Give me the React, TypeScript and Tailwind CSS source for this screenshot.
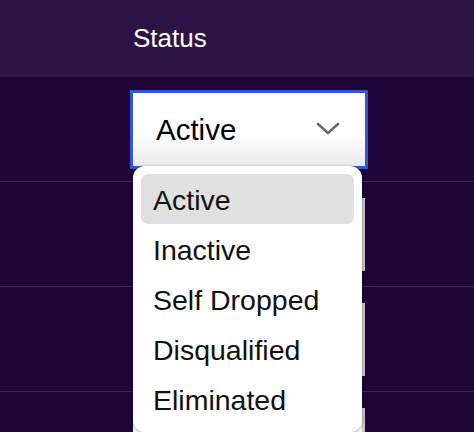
import React from "react";

const options = ["Active", "Inactive", "Self Dropped", "Disqualified", "Eliminated"];

function Chevron() {
  return (
    <svg width="24" height="14" viewBox="0 0 24 14" fill="none">
      <path d="M2 2 L12 11 L22 2" stroke="#6b6b6b" strokeWidth="2.6" strokeLinecap="round" strokeLinejoin="round" />
    </svg>
  );
}

function SelectBox({ focused }: { focused?: boolean }) {
  return (
    <div
      className={
        "w-[232px] h-[73px] flex items-center justify-between pl-[23px] pr-[25px] bg-[linear-gradient(to_bottom,#ffffff_55%,#ebebeb)] text-black text-[29.5px] " +
        (focused ? "outline-[3px] outline-[#3555d8]" : "border-r-[3px] border-[#c8c8c8]")
      }
    >
      <span className="pt-[3px]">Active</span>
      <Chevron />
    </div>
  );
}

export default function App() {
  return (
    <div className="relative w-[474px] h-[432px] overflow-hidden bg-[#1f0638] font-['Liberation_Sans',Arial,sans-serif]">
      <div className="h-[77px] bg-[#2d1447] flex items-center pl-[133px] text-white text-[26px]">
        Status
      </div>
      {[0, 1, 2, 3].map((i) => (
        <div key={i} className="h-[105px] border-b border-[#3b2a52] flex items-center pl-[133px]">
          <SelectBox focused={i === 0} />
        </div>
      ))}
      <div className="absolute left-[133px] top-[166px] w-[229px] rounded-[12px] bg-white p-2 shadow-[0_1px_4px_rgba(0,0,0,0.35)]">
        {options.map((o, i) => (
          <div
            key={o}
            className={
              "h-[50px] flex items-center pl-[12px] pt-[2px] rounded-[7px] text-[28.5px] text-[#111] " +
              (i === 0 ? "bg-[#e0e0e0]" : "")
            }
          >
            {o}
          </div>
        ))}
      </div>
    </div>
  );
}
